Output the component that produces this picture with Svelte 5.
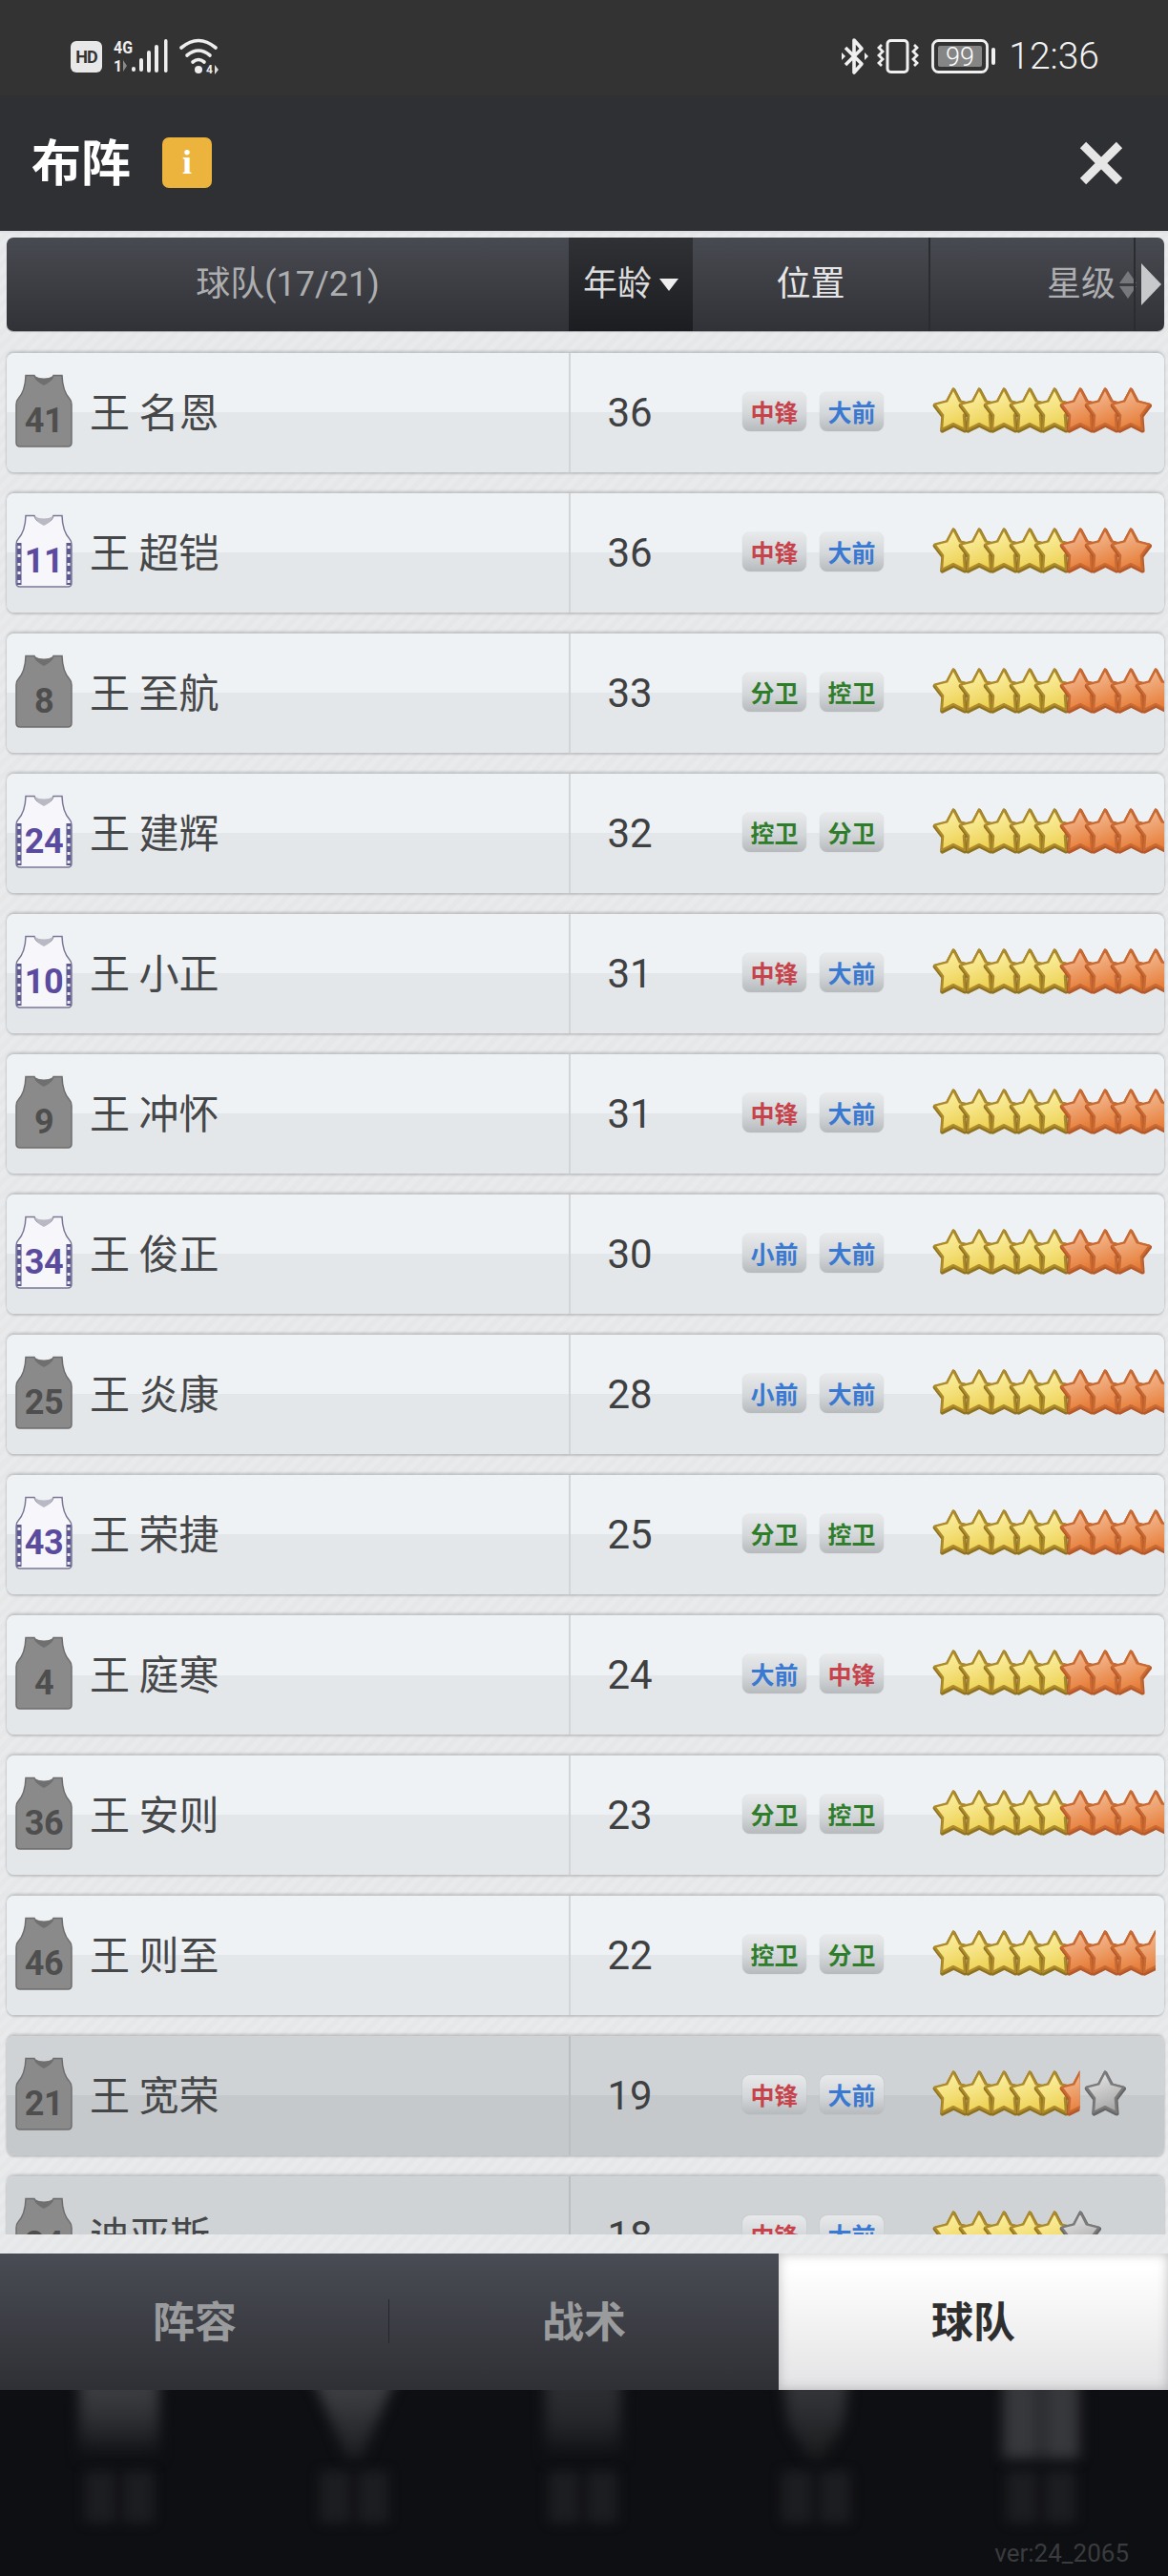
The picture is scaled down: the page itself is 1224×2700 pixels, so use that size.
<script>
  const players = [
    { no: 41, kit: "grey", name: "王 名恩", age: 36, tags: ["中锋", "大前"], orange: 3 },
    { no: 11, kit: "white", name: "王 超铠", age: 36, tags: ["中锋", "大前"], orange: 3 },
    { no: 8, kit: "grey", name: "王 至航", age: 33, tags: ["分卫", "控卫"], orange: 4 },
    { no: 24, kit: "white", name: "王 建辉", age: 32, tags: ["控卫", "分卫"], orange: 4 },
    { no: 10, kit: "white", name: "王 小正", age: 31, tags: ["中锋", "大前"], orange: 4 },
    { no: 9, kit: "grey", name: "王 冲怀", age: 31, tags: ["中锋", "大前"], orange: 4 },
    { no: 34, kit: "white", name: "王 俊正", age: 30, tags: ["小前", "大前"], orange: 3 },
    { no: 25, kit: "grey", name: "王 炎康", age: 28, tags: ["小前", "大前"], orange: 4 },
    { no: 43, kit: "white", name: "王 荣捷", age: 25, tags: ["分卫", "控卫"], orange: 4 },
    { no: 4, kit: "grey", name: "王 庭寒", age: 24, tags: ["大前", "中锋"], orange: 3 },
    { no: 36, kit: "grey", name: "王 安则", age: 23, tags: ["分卫", "控卫"], orange: 4 },
    { no: 46, kit: "grey", name: "王 则至", age: 22, tags: ["控卫", "分卫"], orange: 3.5 },
    { no: 21, kit: "grey", name: "王 宽荣", age: 19, tags: ["中锋", "大前"], orange: 0.5, grey: 1, off: true },
    { no: 24, kit: "grey", name: "迪亚斯", age: 18, tags: ["中锋", "大前"], orange: 0, grey: 1, off: true },
  ];

  const tagColor = { 中锋: "red", 大前: "blue", 小前: "blue", 分卫: "green", 控卫: "green" };

  // five yellow stars, then orange (maybe a half one), then grey
  const starsOf = (p) => {
    const list = [];
    for (let i = 0; i < 5; i++) list.push({ c: "y" });
    for (let i = 0; i < Math.floor(p.orange); i++) list.push({ c: "o" });
    if (p.orange % 1) list.push({ c: "o", half: true });
    for (let i = 0; i < (p.grey || 0); i++) list.push({ c: "g" });
    return list;
  };

  const starPoints = (() => {
    const pts = [];
    for (let i = 0; i < 10; i++) {
      const a = (Math.PI / 5) * i;
      const r = i % 2 ? 0.56 : 1;
      pts.push(`${(24 + 20.5 * r * Math.sin(a)).toFixed(1)},${(27 - 23.5 * r * Math.cos(a)).toFixed(1)}`);
    }
    return pts.join(" ");
  })();

  const dock = ["box", "vee", "box dim", "cup", "box split"];
</script>

<div class="page">
  <svg class="defs" width="0" height="0" aria-hidden="true">
    <defs>
      <linearGradient id="fy" x1="0.2" y1="0" x2="0.6" y2="1">
        <stop offset="0" stop-color="#fdf4ae" />
        <stop offset="1" stop-color="#edd050" />
      </linearGradient>
      <linearGradient id="fo" x1="0.2" y1="0" x2="0.6" y2="1">
        <stop offset="0" stop-color="#f4c09c" />
        <stop offset="1" stop-color="#e67a34" />
      </linearGradient>
      <linearGradient id="fg" x1="0.2" y1="0" x2="0.6" y2="1">
        <stop offset="0" stop-color="#e8e8e8" />
        <stop offset="1" stop-color="#a6a6a6" />
      </linearGradient>
    </defs>
  </svg>

  <div class="status">
    <div class="status-left">
      <span class="hd">HD</span>
      <svg class="signal" width="58" height="38" viewBox="0 0 58 38">
        <text x="0" y="16" class="sig-text" textLength="20" lengthAdjust="spacingAndGlyphs">4G</text>
        <text x="0" y="35" class="sig-text small">1</text>
        <path d="M10 23 v12 l4 -6 z" fill="#8a8a8a" />
        <rect x="19" y="30" width="4" height="5" rx="2" fill="#eee" />
        <rect x="27" y="21" width="4" height="14" rx="2" fill="#eee" />
        <rect x="35" y="13" width="4" height="23" rx="2" fill="#eee" />
        <rect x="43" y="7" width="4" height="29" rx="2" fill="#eee" />
        <rect x="53" y="1" width="3.5" height="35" rx="1.7" fill="#eee" />
      </svg>
      <svg class="wifi" width="44" height="38" viewBox="0 0 44 38">
        <path d="M2 10 Q20 -5 38 10" fill="none" stroke="#eee" stroke-width="3.6" stroke-linecap="round" />
        <path d="M8 18 Q20 8 32 18" fill="none" stroke="#eee" stroke-width="3.6" stroke-linecap="round" />
        <path d="M14 25 Q20 20 26 25" fill="none" stroke="#eee" stroke-width="3.6" stroke-linecap="round" />
        <circle cx="20" cy="33" r="4" fill="#eee" />
        <text x="28" y="37" class="sig-text tiny">4</text>
        <path d="M37 28 v10 l4 -5 z" fill="#ddd" />
      </svg>
    </div>
    <div class="status-right">
      <svg width="28" height="40" viewBox="0 0 28 40">
        <path d="M4 11 L21 28 L13 37 V3 L21 12 L4 29" fill="none" stroke="#f0f0f0" stroke-width="3.6" stroke-linejoin="round" />
        <path d="M0 16 l4 4 l-4 4 z M24 16 l4 4 l-4 4 z" fill="#f0f0f0" />
      </svg>
      <svg class="vib" width="44" height="36" viewBox="0 0 44 36">
        <rect x="11" y="1.5" width="21" height="33" rx="3.5" fill="none" stroke="#f0f0f0" stroke-width="3" />
        <path d="M5 6 l-3 3 l4 4 l-4 4 l4 4 l-4 4 l3 3" fill="none" stroke="#f0f0f0" stroke-width="2.8" />
        <path d="M39 6 l3 3 l-4 4 l4 4 l-4 4 l4 4 l-3 3" fill="none" stroke="#f0f0f0" stroke-width="2.8" />
      </svg>
      <svg class="batt" width="68" height="36" viewBox="0 0 68 36">
        <rect x="1.5" y="1.5" width="57" height="33" rx="6" fill="none" stroke="#f0f0f0" stroke-width="2.8" />
        <rect x="7" y="7" width="46" height="22" rx="2" fill="#858585" />
        <rect x="63" y="9" width="4" height="18" rx="2" fill="#f0f0f0" />
        <text x="30" y="28" class="batt-text">99</text>
      </svg>
      <span class="time">12:36</span>
    </div>
  </div>

  <header class="titlebar">
    <h1>布阵</h1>
    <span class="info">i</span>
    <svg class="close" width="48" height="48" viewBox="0 0 48 48">
      <path d="M5 5 L43 43 M43 5 L5 43" stroke="#e6e6e6" stroke-width="9" />
    </svg>
  </header>

  <section class="list">
    <div class="head">
      <div class="th team">球队(17/21)</div>
      <div class="th age">年龄<i class="down"></i></div>
      <div class="th pos">位置</div>
      <div class="th star">星级
        <span class="sort"><i class="s-up"></i><i class="s-down"></i></span>
      </div>
      <div class="th more"><i class="right"></i></div>
    </div>

    {#each players as p}
      <div class="row" class:off={p.off}>
        <div class="who">
          <span class="jersey">
            <svg width="60" height="78" viewBox="0 0 60 78">
              <path
                class="kit {p.kit}"
                d="M11 1.5 L20 1.5 Q22 8 30 9.5 Q38 8 40 1.5 L49 1.5 Q49.5 18 57 26 Q59 28 59 32 V72 Q59 76 55 76 H5 Q1 76 1 72 V32 Q1 28 3 26 Q10.5 18 11 1.5 Z"
              />
              <path class="collar {p.kit}" d="M20 2 Q22 8 30 12 Q38 8 40 2 Q30 7 20 2 Z" />
              {#if p.kit === "white"}
                <path class="trim" d="M4 30 V74 M56 30 V74" />
                <path class="trim-dots" d="M4 33 V74 M56 33 V74" />
              {/if}
              <text x="30" y="61" class="num {p.kit}">{p.no}</text>
            </svg>
          </span>
          <span class="name">{p.name}</span>
        </div>
        <div class="years">{p.age}</div>
        <div class="tags">
          {#each p.tags as t}
            <span class="tag {tagColor[t]}">{t}</span>
          {/each}
        </div>
        <div class="stars">
          {#each starsOf(p) as s}
            <svg class="st" class:half={s.half} width="48" height="54" viewBox="0 0 48 54">
              <polygon class="edge-{s.c}" points={starPoints} transform="translate(0.4 1.4)" />
              <polygon class="top-{s.c}" fill="url(#f{s.c})" points={starPoints} />
            </svg>
          {/each}
        </div>
      </div>
    {/each}
  </section>

  <div class="strip"></div>

  <nav class="tabs">
    <div class="tab"><span>阵容</span></div>
    <div class="tab"><span>战术</span></div>
    <div class="tab active"><span>球队</span></div>
  </nav>

  <footer class="dock">
    <div class="dock-items" aria-hidden="true">
      {#each dock as d}
        <div class="dock-item">
          <div class="ic"><b class={d}></b></div>
          <div class="lb"><i></i><i></i></div>
        </div>
      {/each}
    </div>
    <span class="ver">ver:24_2065</span>
  </footer>
</div>

<style>
  :global(body) {
    margin: 0;
    background: #0e0f12;
  }

  .page {
    width: 1224px;
    height: 2700px;
    display: flex;
    flex-direction: column;
    overflow: hidden;
    font-family: "Noto Sans CJK SC", "Noto Sans", sans-serif;
    background: repeating-linear-gradient(-45deg, #e9eaec 0 5px, #e6e7e9 5px 10px);
  }

  .defs {
    position: absolute;
  }

  .status {
    height: 100px;
    flex: none;
    background: #333333;
    display: flex;
    justify-content: space-between;
    align-items: center;
    padding: 0 72px 0 74px;
    box-sizing: border-box;
    color: #eee;
  }
  .status-left,
  .status-right {
    display: flex;
    align-items: center;
    margin-top: 18px;
  }
  .hd {
    width: 33px;
    height: 33px;
    border-radius: 6px;
    background: #e8e8e8;
    color: #333;
    font: 700 18px/33px "Roboto", sans-serif;
    letter-spacing: -1px;
    text-align: center;
  }
  .signal {
    margin-left: 12px;
  }
  .wifi {
    margin-left: 11px;
  }
  .sig-text {
    font: 700 19px "Roboto", sans-serif;
    fill: #eee;
  }
  .sig-text.small {
    font-size: 16px;
  }
  .sig-text.tiny {
    font-size: 12px;
  }
  .vib {
    margin-left: 9px;
  }
  .batt {
    margin-left: 13px;
  }
  .batt-text {
    font: 300 27px "Roboto", sans-serif;
    fill: #fff;
    text-anchor: middle;
  }
  .time {
    margin-left: 13px;
    font: 300 39px/1 "Roboto", sans-serif;
    color: #f2f2f2;
  }

  .titlebar {
    height: 142px;
    flex: none;
    background: #2f3034;
    display: flex;
    align-items: center;
    padding: 0 46px 0 33px;
  }
  h1 {
    margin: -6px 0 0;
    font-size: 52px;
    font-weight: 700;
    line-height: 1;
    color: #fff;
  }
  .info {
    margin-left: 33px;
    width: 52px;
    height: 53px;
    border-radius: 7px;
    background: #ecb43c;
    color: #fff;
    font: 700 36px/53px "Liberation Serif", serif;
    text-align: center;
    margin-top: -2px;
  }
  .close {
    margin-left: auto;
  }

  .list {
    height: 2100px;
    flex: none;
    overflow: hidden;
    padding: 5px 4px 0 7px;
    box-sizing: border-box;
    border-top: 2px solid #dfe0e2;
  }

  .head {
    height: 98px;
    display: flex;
    border-radius: 7px;
    overflow: hidden;
    background: linear-gradient(#484a51, #313237);
    margin-bottom: 23px;
    box-shadow: 0 1px 1px rgba(0, 0, 0, 0.3);
  }
  .th {
    display: flex;
    align-items: center;
    justify-content: center;
    font-size: 36px;
    line-height: 1;
    font-family: "Roboto", "Noto Sans CJK SC", sans-serif;
  }
  .team {
    width: 589px;
    color: #adaeb0;
  }
  .age {
    width: 130px;
    color: #dcdcdc;
    background: linear-gradient(#303135, #1c1d20);
    gap: 8px;
    justify-content: flex-start;
    padding-left: 15px;
    box-sizing: border-box;
  }
  .down {
    border-left: 10px solid transparent;
    border-right: 10px solid transparent;
    border-top: 13px solid #eee;
  }
  .pos {
    width: 249px;
    color: #e6e6e6;
    border-right: 2px solid #2b2c30;
    box-sizing: border-box;
  }
  .star {
    width: 213px;
    color: #adaeb0;
    justify-content: flex-end;
    gap: 4px;
  }
  .sort {
    display: flex;
    flex-direction: column;
    gap: 3px;
    margin-right: -3px;
  }
  .s-up {
    border-left: 9px solid transparent;
    border-right: 9px solid transparent;
    border-bottom: 13px solid #77787b;
  }
  .s-down {
    border-left: 9px solid transparent;
    border-right: 9px solid transparent;
    border-top: 13px solid #77787b;
  }
  .more {
    flex: 1;
    border-left: 2px solid #2b2c30;
    justify-content: flex-start;
    padding-left: 6px;
  }
  .right {
    border-top: 22px solid transparent;
    border-bottom: 22px solid transparent;
    border-left: 21px solid #c8c9ca;
  }

  .row {
    height: 125px;
    margin-bottom: 22px;
    display: flex;
    align-items: center;
    overflow: hidden;
    border-radius: 8px;
    background: linear-gradient(#eff2f4 0 50%, #e4e7e9 50% 100%);
    box-shadow: 0 -2px 3px rgba(0, 0, 0, 0.18), 0 2px 2px rgba(0, 0, 0, 0.16);
  }
  .row.off {
    background: linear-gradient(#d0d3d5 0 50%, #c6c9cb 50% 100%);
  }

  .who {
    width: 589px;
    flex: none;
    align-self: stretch;
    display: flex;
    align-items: center;
    border-right: 2px solid #d2d4d6;
  }
  .off .who {
    border-right-color: #bbbec0;
  }
  .jersey {
    display: block;
    width: 60px;
    height: 78px;
    margin-left: 9px;
    margin-top: -3px;
  }
  .kit.grey {
    fill: #8a8a8a;
    stroke: #6e6e6e;
    stroke-width: 1.5;
  }
  .kit.white {
    fill: #f6f6fb;
    stroke: #7a7896;
    stroke-width: 1.5;
  }
  .collar.grey {
    fill: #6f6f6f;
  }
  .collar.white {
    fill: #b9b9c3;
  }
  .trim {
    stroke: #5d5990;
    stroke-width: 5;
    fill: none;
  }
  .trim-dots {
    stroke: #eeeef6;
    stroke-width: 3;
    stroke-dasharray: 3 6;
    fill: none;
  }
  .num {
    font: 700 36px "Roboto", sans-serif;
    text-anchor: middle;
    letter-spacing: -0.5px;
  }
  .num.grey {
    fill: #4e4e4e;
  }
  .num.white {
    fill: #5a4b9e;
  }
  .name {
    margin-left: 18px;
    margin-top: -6px;
    font-size: 42px;
    line-height: 1;
    color: #464749;
    white-space: pre;
  }

  .years {
    width: 124px;
    flex: none;
    text-align: center;
    font: 400 42px/1 "Roboto", sans-serif;
    color: #3f4042;
  }

  .tags {
    width: 253px;
    flex: none;
    box-sizing: border-box;
    padding-left: 56px;
    display: flex;
    gap: 14px;
    margin-top: -3px;
  }
  .tag {
    width: 67px;
    height: 41px;
    border-radius: 8px;
    background: linear-gradient(#e7e9eb, #d4d7d9 55%, #b7babc);
    box-shadow: 0 0 1px rgba(0, 0, 0, 0.25);
    font-size: 25px;
    font-weight: 700;
    line-height: 41px;
    text-align: center;
  }
  .tag.red {
    color: #c7434b;
  }
  .tag.blue {
    color: #3a79d1;
  }
  .tag.green {
    color: #2f7d2b;
  }

  .stars {
    display: flex;
    flex: none;
    margin-top: -3px;
  }
  .st {
    flex: none;
    margin-right: -21.5px;
    display: block;
  }
  .st.half {
    clip-path: inset(0 24px 0 0);
  }
  .edge-y,
  .edge-o,
  .edge-g {
    stroke-width: 4.4;
    stroke-linejoin: round;
  }
  .edge-y {
    fill: #8f7220;
    stroke: #8f7220;
  }
  .edge-o {
    fill: #b5582a;
    stroke: #b5582a;
  }
  .edge-g {
    fill: #666;
    stroke: #666;
  }
  .top-y,
  .top-o,
  .top-g {
    stroke-width: 2.4;
    stroke-linejoin: round;
  }
  .top-y {
    stroke: #ad8b2c;
  }
  .top-o {
    stroke: #c96a32;
  }
  .top-g {
    stroke: #7a7a7a;
  }

  .strip {
    height: 20px;
    flex: none;
  }

  .tabs {
    height: 143px;
    flex: none;
    display: flex;
    background: linear-gradient(#4a4c55, #2f3035);
  }
  .tab {
    width: 408px;
    display: flex;
    align-items: center;
    justify-content: center;
    font-size: 44px;
    font-weight: 700;
    line-height: 1;
    color: #9a9b9c;
  }
  .tab span {
    margin-top: -5px;
  }
  .tab:first-child {
    position: relative;
  }
  .tab:first-child::after {
    content: "";
    position: absolute;
    right: 0;
    top: 48px;
    height: 46px;
    width: 1px;
    background: #26272a;
  }
  .tab.active {
    color: #2e2e2e;
    background: linear-gradient(#ffffff 10%, #e3e3e5);
    box-shadow: inset 0 0 12px rgba(120, 120, 125, 0.45);
  }

  .dock {
    flex: 1;
    position: relative;
    overflow: hidden;
    background: #0e0f12;
  }
  .dock-items {
    display: grid;
    grid-template-columns: 246px 246px 234px 254px 218px;
    margin-left: 2px;
  }
  .dock-item {
    display: flex;
    flex-direction: column;
    align-items: center;
  }
  .ic {
    margin-top: -20px;
    height: 92px;
    filter: blur(7px);
  }
  .ic b {
    display: block;
    height: 100%;
    width: 84px;
    background: linear-gradient(#3b3c40 25%, #2b2c2f 60%, #0e0f12);
  }
  .ic b.dim {
    width: 80px;
    background: linear-gradient(#2c2d31 25%, #242529 60%, #0e0f12);
  }
  .ic b.split {
    width: 80px;
    background: linear-gradient(90deg, #37383b 0 40%, #232427 50%, #37383b 60% 100%);
  }
  .ic b.vee {
    width: 94px;
    background: linear-gradient(#3c3d41 25%, #1c1d20);
    clip-path: polygon(0 0, 100% 0, 58% 100%, 42% 100%);
  }
  .ic b.cup {
    width: 70px;
    background: linear-gradient(#333437 25%, #1a1b1d);
    clip-path: polygon(0 0, 100% 0, 92% 60%, 60% 100%, 40% 100%, 8% 60%);
  }
  .lb {
    margin-top: 13px;
    display: flex;
    gap: 8px;
    filter: blur(6px);
  }
  .lb i {
    display: block;
    width: 32px;
    height: 54px;
    background: #1c1d20;
  }
  .ver {
    position: absolute;
    right: 41px;
    bottom: 8px;
    font: 400 26px/1.2 "Roboto", sans-serif;
    color: #3a3b3e;
  }
</style>
